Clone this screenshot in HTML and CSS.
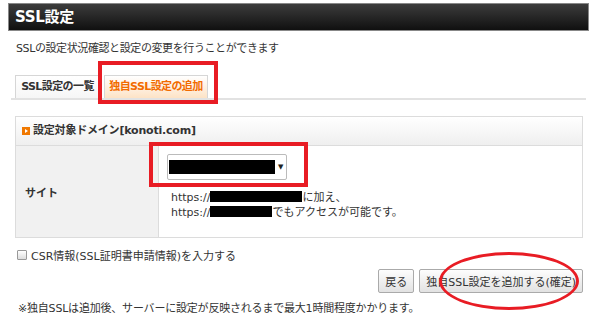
FILE: index.html
```html
<!DOCTYPE html>
<html lang="ja">
<head>
  <meta charset="UTF-8">
  <title>SSL設定</title>
  <link rel="stylesheet" href="styles.css">
</head>
<body>
  <div class="page">
    <h1 class="title-bar">SSL設定</h1>
    <p class="lead">SSLの設定状況確認と設定の変更を行うことができます</p>

    <div class="tabs">
      <div class="tab">SSL設定の一覧</div>
      <div class="tab active">独自SSL設定の追加</div>
      <span class="mark mark-tab"></span>
    </div>

    <div class="panel">
      <div class="panel-head"><span class="head-icon"></span>設定対象ドメイン[konoti.com]</div>
      <div class="row">
        <div class="label">サイト</div>
        <div class="value">
          <div class="select"><span class="redact"></span><span class="arrow">▼</span></div>
          <span class="mark mark-select"></span>
          <div class="url first">https://<span class="redact r1"></span>に加え、</div>
          <div class="url">https://<span class="redact r2"></span>でもアクセスが可能です。</div>
        </div>
      </div>
    </div>

    <label class="csr"><span class="check"></span>CSR情報(SSL証明書申請情報)を入力する</label>

    <div class="actions">
      <button class="btn">戻る</button>
      <button class="btn">独自SSL設定を追加する(確定)</button>
      <span class="mark mark-ellipse"></span>
    </div>

    <p class="note">※独自SSLは追加後、サーバーに設定が反映されるまで最大1時間程度かかります。</p>
  </div>
</body>
</html>
```

FILE: styles.css
```css
body {
  margin: 0;
  background: #fff;
  color: #333;
  font-family: "DejaVu Sans", "Noto Sans CJK JP", sans-serif;
  font-size: 11px;
}
.page {
  width: 581px;
  margin-left: 8px;
  padding-top: 3px;
}
.title-bar {
  margin: 0;
  height: 26px;
  line-height: 26px;
  padding-left: 6px;
  border: 1px solid #888;
  background: linear-gradient(#3c3c3c, #101010);
  color: #fff;
  font-size: 15px;
  font-weight: bold;
  letter-spacing: -0.3px;
}
.lead {
  margin: 10px 0 0 8px;
  height: 16px;
  line-height: 16px;
  letter-spacing: -0.4px;
}
.tabs {
  position: relative;
  display: flex;
  gap: 4px;
  margin: 18px 3px 0 3px;
  padding-left: 4px;
  border-bottom: 2px solid #e2e2e2;
}
.tab {
  width: 83px;
  height: 22px;
  line-height: 22px;
  text-align: center;
  border: 1px solid #d6d6d6;
  border-bottom: none;
  background: linear-gradient(#fff, #f6f6f6);
  font-weight: bold;
  letter-spacing: -0.6px;
  white-space: nowrap;
}
.tab.active {
  width: 102px;
  color: #f26b00;
  background: linear-gradient(#fff, #fde3c6);
}
.mark {
  position: absolute;
  border: 4px solid #e81c24;
}
.mark-tab {
  left: 87px;
  top: -14px;
  width: 112px;
  height: 35px;
}
.panel {
  margin: 16px 6px 0 7px;
  border: 1px solid #dcdcdc;
}
.panel-head {
  height: 28px;
  line-height: 28px;
  padding-left: 6px;
  background: linear-gradient(#fff, #efefef);
  border-bottom: 1px solid #dcdcdc;
  font-weight: bold;
  letter-spacing: -0.2px;
}
.head-icon {
  display: inline-block;
  width: 8px;
  height: 8px;
  margin-right: 3px;
  vertical-align: -1px;
  background: #f07800;
  position: relative;
}
.head-icon::after {
  content: "";
  position: absolute;
  left: 3px;
  top: 2px;
  border-left: 3px solid #fff;
  border-top: 2px solid transparent;
  border-bottom: 2px solid transparent;
}
.row {
  display: flex;
  height: 91px;
}
.label {
  width: 133px;
  padding-left: 9px;
  background: #f1f1f1;
  border-right: 1px solid #dcdcdc;
  display: flex;
  align-items: center;
  font-weight: bold;
}
.value {
  position: relative;
  padding: 8px 0 0 8px;
}
.select {
  display: flex;
  align-items: center;
  width: 117px;
  height: 24px;
  border: 1px solid #bbb;
  border-radius: 2px;
  padding-left: 1px;
}
.select .redact {
  width: 106px;
  height: 14px;
}
.arrow {
  font-size: 7px;
  margin-left: 3px;
  color: #222;
}
.redact {
  display: inline-block;
  background: #000;
}
.mark-select {
  left: -10px;
  top: -4px;
  width: 151px;
  height: 37px;
}
.url {
  margin-left: 4px;
  height: 15px;
  line-height: 15px;
}
.url.first {
  margin-top: 10px;
}
.url .redact {
  height: 11px;
  vertical-align: -1px;
}
.r1 { width: 92px; }
.r2 { width: 62px; }
.csr {
  display: flex;
  align-items: center;
  margin: 10px 0 0 9px;
  height: 14px;
}
.check {
  width: 8px;
  height: 8px;
  border: 1px solid #999;
  border-radius: 1px;
  background: linear-gradient(#fff, #ddd);
  margin-right: 4px;
}
.actions {
  position: relative;
  display: flex;
  justify-content: flex-end;
  gap: 5px;
  margin: 7px 6px 0 0;
}
.btn {
  height: 24px;
  padding: 0 6px;
  border: 1px solid #aaa;
  border-radius: 2px;
  background: linear-gradient(#fdfdfd, #e2e2e2);
  color: #333;
  font-family: inherit;
  font-size: 11px;
}
.mark-ellipse {
  right: 4px;
  top: -17px;
  width: 134px;
  height: 52px;
  border-width: 3px;
  border-radius: 50%;
}
.note {
  margin: 6px 0 0 10px;
  letter-spacing: -0.2px;
}
```
